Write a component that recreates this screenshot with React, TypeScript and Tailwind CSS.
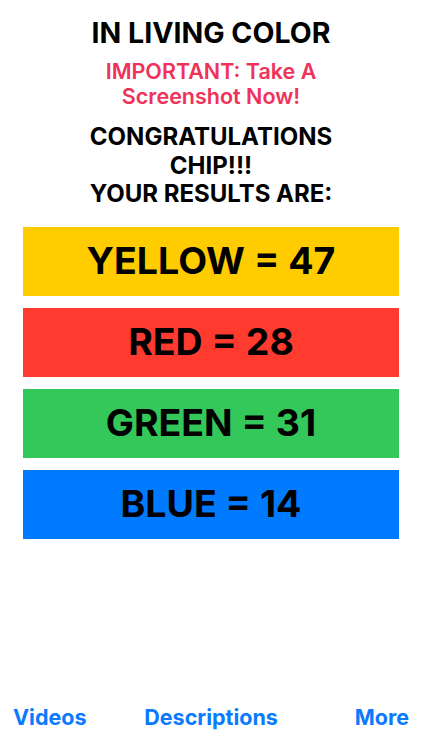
export default function App() {
  const RESULTS = [
    { label: 'YELLOW = 47', bg: 'bg-[#ffcc00]' },
    { label: 'RED = 28', bg: 'bg-[#ff3b30]' },
    { label: 'GREEN = 31', bg: 'bg-[#34c759]' },
    { label: 'BLUE = 14', bg: 'bg-[#007aff]' },
  ];

  return (
    <div className="h-[750px] w-[422px] bg-white flex flex-col font-['Inter',sans-serif] text-black">
      {/* Header */}
      <div className="flex flex-col items-center pt-[16px] text-center">
        <h1 className="text-[28.5px] leading-[34px] font-bold">IN LIVING COLOR</h1>
        <p className="mt-[9px] text-[21.5px] leading-[25px] font-semibold text-[#f0325a]">
          IMPORTANT: Take A<br />Screenshot Now!
        </p>
        <p className="mt-[14px] text-[24px] leading-[28.5px] font-bold">
          CONGRATULATIONS<br />CHIP!!!<br />YOUR RESULTS ARE:
        </p>
      </div>

      {/* Results */}
      <div className="mt-[18px] flex flex-col gap-[12px] px-[23px]">
        {RESULTS.map((r) => (
          <div key={r.label} className={`${r.bg} h-[69px] flex items-center justify-center`}>
            <span className="text-[37.5px] font-bold leading-none">{r.label}</span>
          </div>
        ))}
      </div>

      <div className="flex-1" />

      {/* Tab bar */}
      <div className="flex items-center justify-between px-[13px] pb-[17px] text-[21.5px] font-bold text-[#0a7aff]">
        <span>Videos</span>
        <span className="mr-[19px]">Descriptions</span>
        <span>More</span>
      </div>
    </div>
  );
}
